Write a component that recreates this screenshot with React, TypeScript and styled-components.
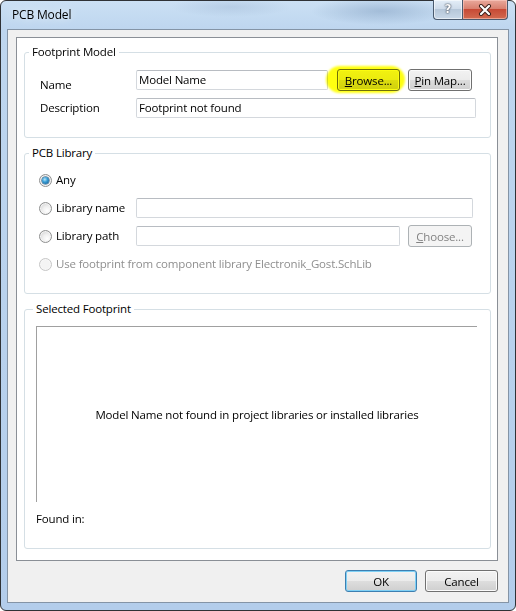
import React from 'react'
import styled, { createGlobalStyle, css } from 'styled-components'

const GlobalStyle = createGlobalStyle`
  html, body {
    margin: 0;
    padding: 0;
  }
  body {
    width: 516px;
    height: 611px;
    overflow: hidden;
    background: #ffffff;
    font-family: 'Open Sans', 'Noto Sans', sans-serif;
    font-size: 11.5px;
    letter-spacing: -0.17px;
    color: #000000;
  }
`

const Window = styled.div`
  box-sizing: border-box;
  width: 516px;
  height: 611px;
  display: flex;
  flex-direction: column;
  padding: 0 6px 7px 6px;
  border: 1px solid #2f3236;
  border-radius: 6px;
  background:
    radial-gradient(ellipse 70px 14px at 380px 10px, rgba(120, 150, 185, 0.45), transparent),
    radial-gradient(ellipse 60px 10px at 230px 6px, rgba(150, 175, 205, 0.35), transparent),
    linear-gradient(180deg, #cbe0f4 0px, #bed6ef 28px, #b3cdeb 100%);
`

const TitleBar = styled.div`
  height: 28px;
  display: flex;
  align-items: flex-start;
  padding-left: 5px;
`

const Title = styled.div`
  line-height: 16px;
  margin-top: 6px;
  font-size: 12px;
  color: #000000;
  text-shadow: 0 0 8px rgba(255, 255, 255, 0.9);
`

const CaptionButtons = styled.div`
  margin-left: auto;
  margin-top: -1px;
  margin-right: 1px;
  display: flex;
`

const CaptionButton = styled.div<{ $close?: boolean }>`
  box-sizing: border-box;
  height: 20px;
  width: ${p => (p.$close ? 46 : 29)}px;
  display: flex;
  align-items: center;
  justify-content: center;
  border: 1px solid #4a5a6e;
  border-top: none;
  ${p =>
    p.$close
      ? css`
          border-radius: 0 0 4px 0;
          background: linear-gradient(180deg, #e9a99c 0%, #d98170 45%, #c74a36 50%, #d26a4f 100%);
          box-shadow: inset 0 0 0 1px rgba(255, 210, 200, 0.55);
        `
      : css`
          border-right: none;
          border-radius: 0 0 0 4px;
          background: linear-gradient(180deg, #e4eef8 0%, #cfdcea 45%, #b6c7d9 50%, #c9d8e8 100%);
          box-shadow: inset 0 0 0 1px rgba(255, 255, 255, 0.55);
        `}
`

const HelpGlyph = styled.span`
  font-family: 'DejaVu Sans', sans-serif;
  font-weight: bold;
  font-size: 12px;
  color: #ffffff;
  text-shadow: 0 0 1px #2e3a4a, 0 0 2px #2e3a4a;
  margin-top: -1px;
`

const Client = styled.div`
  flex: 1;
  display: flex;
  flex-direction: column;
  border: 1px solid #8494a6;
  background: #f0f0f0;
  padding: 7px 10px 0 8px;
  min-height: 0;
`

const Panel = styled.div`
  flex: 1;
  display: flex;
  flex-direction: column;
  background: #ffffff;
  border: 1px solid #8a8f96;
  padding: 14px 6px 11px 7px;
`

const Group = styled.div<{ $grow?: boolean }>`
  position: relative;
  display: flex;
  flex-direction: column;
  border: 1px solid #d5dfe5;
  border-radius: 3px;
  & + & {
    margin-top: 15px;
  }
  ${p =>
    p.$grow &&
    css`
      flex: 1;
    `}
`

const Legend = styled.div<{ $indent: number }>`
  position: absolute;
  top: -9px;
  left: ${p => p.$indent}px;
  padding: 0 3px;
  background: #ffffff;
  line-height: 16px;
  color: #000000;
`

const Rows = styled.div<{ $top: number; $bottom: number; $left: number; $right?: number }>`
  display: flex;
  flex-direction: column;
  gap: 6px;
  padding: ${p => `${p.$top}px ${p.$right ?? 0}px ${p.$bottom}px ${p.$left}px`};
`

const Row = styled.div`
  display: flex;
  align-items: center;
  height: 22px;
`

const Label = styled.div<{ $drop?: number }>`
  width: 96px;
  flex-shrink: 0;
  line-height: 16px;
  position: relative;
  top: ${p => p.$drop ?? 0}px;
`

const TextBox = styled.div<{ $width: number }>`
  box-sizing: border-box;
  width: ${p => p.$width}px;
  height: 20px;
  padding: 0 2px;
  line-height: 18px;
  border: 1px solid #d4d8dd;
  border-top-color: #b8bcc2;
  border-radius: 2px;
  background: #ffffff;
  white-space: nowrap;
  overflow: hidden;
`

const Button = styled.div<{ $width: number; $default?: boolean; $disabled?: boolean }>`
  box-sizing: border-box;
  width: ${p => p.$width}px;
  height: 22px;
  display: flex;
  align-items: center;
  justify-content: center;
  border: 1px solid #707070;
  border-radius: 3px;
  background: linear-gradient(180deg, #f2f2f2 0%, #ebebeb 50%, #dddddd 51%, #cfcfcf 100%);
  box-shadow: inset 0 0 0 1px #fbfbfb;
  color: #000000;
  white-space: nowrap;
  ${p =>
    p.$default &&
    css`
      border-color: #3c7fb1;
      box-shadow: inset 0 0 0 1px #7fd0f5;
    `}
  ${p =>
    p.$disabled &&
    css`
      border-color: #adb2b5;
      background: #f4f4f4;
      box-shadow: none;
      color: #838383;
    `}
`

const HighlightWrap = styled.div`
  position: relative;
  margin-left: 9px;
  margin-right: 8px;
`

const Marker = styled.span`
  position: absolute;
  left: -11px;
  right: -5px;
  top: -3px;
  bottom: -2px;
  border-radius: 14px / 50%;
  background: #ffff10;
  mix-blend-mode: multiply;
  filter: blur(1.2px);
  pointer-events: none;
`

const RadioItem = styled.div<{ $disabled?: boolean }>`
  display: flex;
  align-items: center;
  width: 96px;
  flex-shrink: 0;
  white-space: nowrap;
  line-height: 16px;
  color: ${p => (p.$disabled ? '#8f8f8f' : '#000000')};
`

const RadioCircle = styled.span<{ $checked?: boolean; $disabled?: boolean }>`
  box-sizing: border-box;
  position: relative;
  width: 13px;
  height: 13px;
  margin-left: -1px;
  margin-right: 4px;
  flex-shrink: 0;
  border-radius: 50%;
  border: 1px solid ${p => (p.$disabled ? '#c6c6c6' : '#8e8f8f')};
  background: ${p =>
    p.$disabled
      ? '#f4f4f4'
      : 'radial-gradient(circle at 65% 70%, #ffffff 0%, #f0f0f0 40%, #c9c9c9 100%)'};
  box-shadow: inset 0 0 0 1px ${p => (p.$disabled ? '#f7f7f7' : '#f4f4f4')};
  ${p =>
    p.$checked &&
    css`
      &::after {
        content: '';
        position: absolute;
        left: 2px;
        top: 2px;
        width: 7px;
        height: 7px;
        border-radius: 50%;
        background: radial-gradient(circle at 40% 35%, #b9e6fb 0%, #3a9fd6 40%, #0b4f86 100%);
        box-shadow: 0 0 0 0.5px #1a4f78;
      }
    `}
`

const Preview = styled.div`
  flex: 1;
  display: flex;
  align-items: center;
  justify-content: center;
  border-top: 1px solid #a0a0a0;
  border-left: 1px solid #a0a0a0;
  line-height: 16px;
`

const FoundIn = styled.div`
  margin-top: 9px;
  line-height: 16px;
`

const PreviewArea = styled.div`
  flex: 1;
  display: flex;
  flex-direction: column;
  padding: 16px 13px 21px 11px;
`

const Footer = styled.div`
  display: flex;
  justify-content: flex-end;
  gap: 8px;
  padding: 9px 0 10px 0;
`

function CloseIcon() {
  return (
    <svg width="14" height="12" viewBox="0 0 14 12">
      <path d="M3 2 L11 10 M11 2 L3 10" stroke="#3a1f1a" strokeWidth="4" strokeLinecap="round" />
      <path d="M3 2 L11 10 M11 2 L3 10" stroke="#ffffff" strokeWidth="2.2" strokeLinecap="round" />
    </svg>
  )
}

export default function App() {
  return (
    <>
      <GlobalStyle />
      <Window>
        <TitleBar>
          <Title>PCB Model</Title>
          <CaptionButtons>
            <CaptionButton>
              <HelpGlyph>?</HelpGlyph>
            </CaptionButton>
            <CaptionButton $close>
              <CloseIcon />
            </CaptionButton>
          </CaptionButtons>
        </TitleBar>
        <Client>
          <Panel>
            <Group>
              <Legend $indent={4}>Footprint Model</Legend>
              <Rows $top={16} $bottom={18} $left={15}>
                <Row>
                  <Label $drop={5}>Name</Label>
                  <TextBox $width={192}>Model Name</TextBox>
                  <HighlightWrap>
                    <Button $width={63}>
                      <span>
                        <u>B</u>rowse...
                      </span>
                    </Button>
                    <Marker />
                  </HighlightWrap>
                  <Button $width={64}>
                    <span>
                      <u>P</u>in Map...
                    </span>
                  </Button>
                </Row>
                <Row>
                  <Label>Description</Label>
                  <TextBox $width={340}>Footprint not found</TextBox>
                </Row>
              </Rows>
            </Group>
            <Group>
              <Legend $indent={4}>PCB Library</Legend>
              <Rows $top={15} $bottom={18} $left={15}>
                <Row>
                  <RadioItem>
                    <RadioCircle $checked />
                    Any
                  </RadioItem>
                </Row>
                <Row>
                  <RadioItem>
                    <RadioCircle />
                    Library name
                  </RadioItem>
                  <TextBox $width={337} />
                </Row>
                <Row>
                  <RadioItem>
                    <RadioCircle />
                    Library path
                  </RadioItem>
                  <TextBox $width={264} />
                  <Button $width={64} $disabled style={{ marginLeft: 8 }}>
                    <span>
                      <u>C</u>hoose...
                    </span>
                  </Button>
                </Row>
                <Row>
                  <RadioItem $disabled>
                    <RadioCircle $disabled />
                    Use footprint from component library Electronik_Gost.SchLib
                  </RadioItem>
                </Row>
              </Rows>
            </Group>
            <Group $grow>
              <Legend $indent={8}>Selected Footprint</Legend>
              <PreviewArea>
                <Preview>Model Name not found in project libraries or installed libraries</Preview>
                <FoundIn>Found in:</FoundIn>
              </PreviewArea>
            </Group>
          </Panel>
          <Footer>
            <Button $width={72} $default>
              OK
            </Button>
            <Button $width={73}>Cancel</Button>
          </Footer>
        </Client>
      </Window>
    </>
  )
}
